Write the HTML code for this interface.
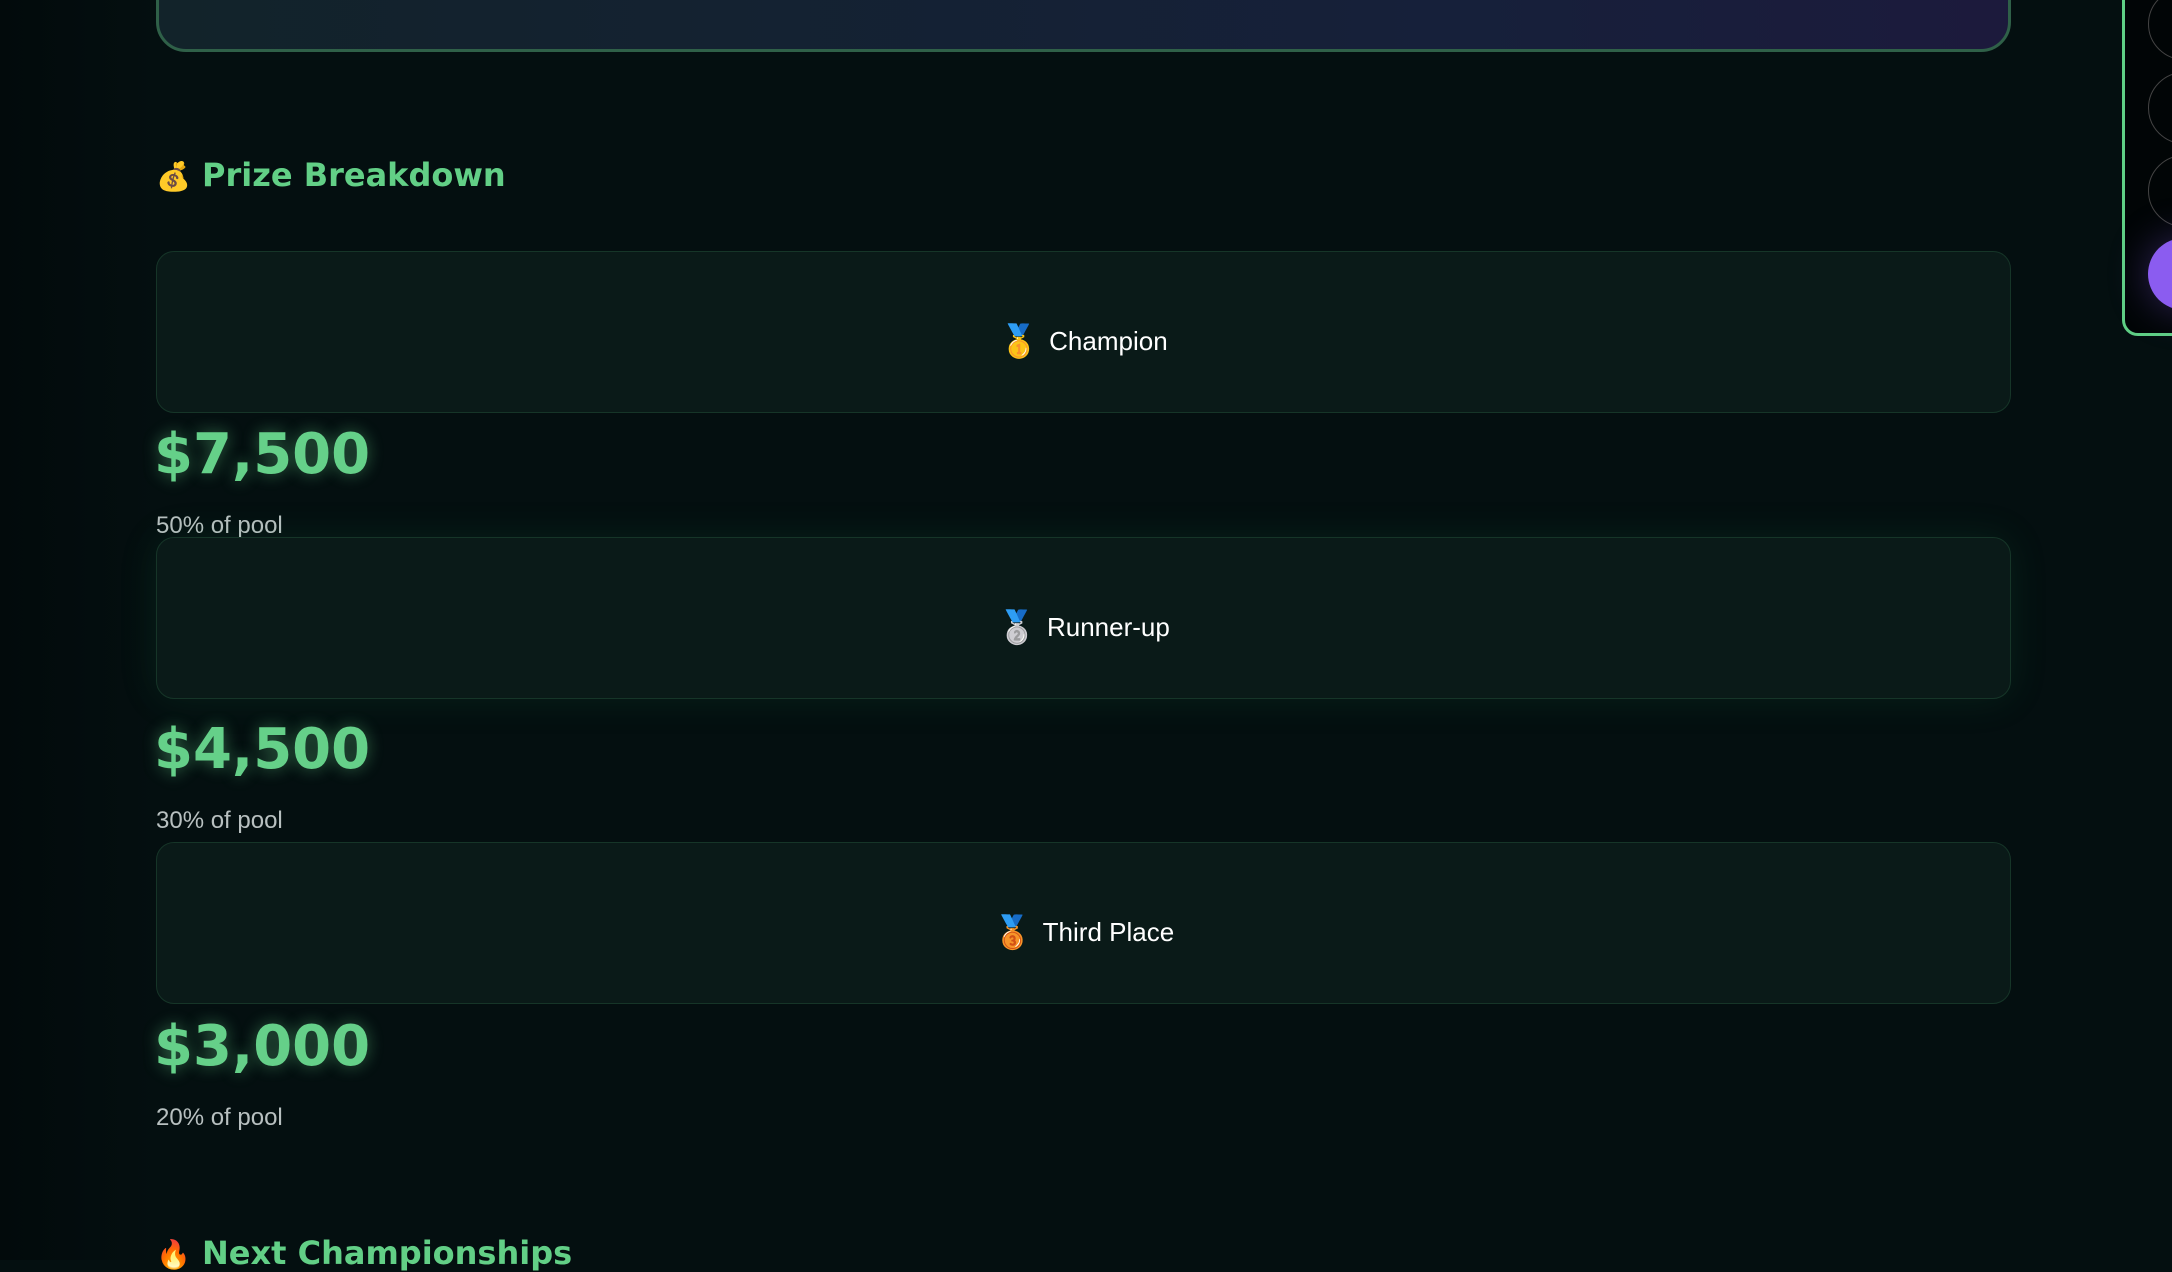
<!DOCTYPE html>
<html><head><meta charset="utf-8"><style>
*{margin:0;padding:0;box-sizing:border-box}
body{width:2172px;height:1260px;overflow:hidden;background:#040f10;font-family:"Liberation Sans","Noto Sans CJK SC",sans-serif;position:relative}
.bgl{position:absolute;left:0;top:0;width:160px;height:1260px;background:linear-gradient(90deg,#020a0b,rgba(4,15,16,0))}
.top{position:absolute;left:156px;top:-40px;width:1855px;height:92px;border:3px solid #2f6048;border-radius:30px;background:linear-gradient(90deg,#12232a,#16203a 70%,#1c1a3c)}
.h{position:absolute;left:156px;color:#62cf86;font-weight:bold;font-size:32px;letter-spacing:0;font-family:"DejaVu Sans",sans-serif}
.card{position:absolute;left:156px;width:1855px;height:162px;padding-top:18px;border:1.5px solid #163528;border-radius:18px;background:#0a1a18;display:flex;align-items:center;justify-content:center;color:#fff;font-size:26px}
.card span.e{font-size:32px;margin-right:10px}
.amt{position:absolute;left:154px;color:#65d089;font-weight:bold;font-size:56px;letter-spacing:0;font-family:"DejaVu Sans",sans-serif;text-shadow:0 0 16px rgba(101,208,137,.45);line-height:1}
.pct{position:absolute;left:156px;color:#b8c0c0;font-size:24px;line-height:1}
.panel{position:absolute;left:2122px;top:-20px;width:80px;height:356px;border:3px solid #5fcf85;border-radius:16px;background:#010506}
.c{position:absolute;left:2148px;width:72px;height:72px;border:1.5px solid #444;border-radius:50%}
</style></head><body>
<div class="bgl"></div>
<div class="top"></div>
<div class="h" style="top:156px"><span style="font-size:28px">💰</span> Prize Breakdown</div>

<div class="card" style="top:251px"><span class="e">🥇</span>Champion</div>
<div class="amt" style="top:427px">$7,500</div>
<div class="pct" style="top:514px">50% of pool</div>

<div class="card" style="top:537px;box-shadow:0 0 40px rgba(40,160,90,.12)"><span class="e">🥈</span>Runner-up</div>
<div class="amt" style="top:722px">$4,500</div>
<div class="pct" style="top:809px">30% of pool</div>

<div class="card" style="top:842px"><span class="e">🥉</span>Third Place</div>
<div class="amt" style="top:1019px">$3,000</div>
<div class="pct" style="top:1106px">20% of pool</div>

<div class="h" style="top:1234px"><span style="font-size:28px">🔥</span> Next Championships</div>

<div class="panel"></div>
<div class="c" style="top:-12px"></div>
<div class="c" style="top:72px"></div>
<div class="c" style="top:155px"></div>
<div class="c" style="top:238px;border:none;background:#8b5cf0;box-shadow:0 0 40px rgba(139,92,240,.35)"></div>
</body></html>
